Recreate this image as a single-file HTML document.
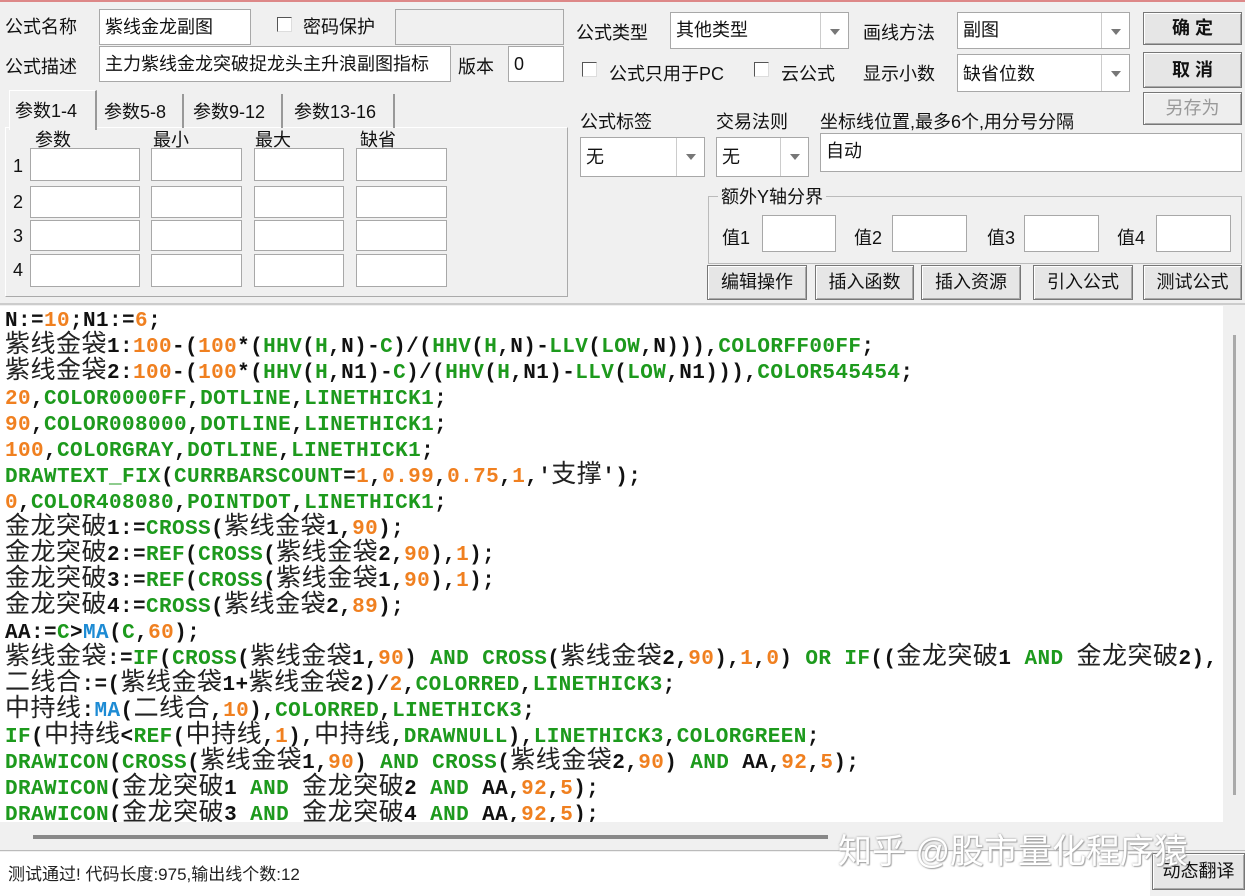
<!DOCTYPE html>
<html><head><meta charset="utf-8"><style>
*{box-sizing:border-box;margin:0;padding:0}
body{width:1245px;height:896px;background:#f0f0f0;position:relative;overflow:hidden;font-family:"Liberation Sans","Noto Sans CJK SC",sans-serif;font-size:18px;color:#111}
.a{position:absolute;white-space:nowrap}
.inp{position:absolute;background:#fff;border:1px solid #a8a8a8;font-size:18px;padding:4px 5px;line-height:26px;white-space:nowrap;overflow:hidden}
.cb{position:absolute;width:15px;height:15px;background:#fff;border:1px solid #555;border-right-color:#ddd;border-bottom-color:#ddd}
.btn{position:absolute;background:#e6e6e6;border:1px solid #777;box-shadow:inset 1px 1px 0 #fff,inset -1px -1px 0 #aaa;text-align:center;font-size:18px}
.dd{position:absolute;right:0;top:0;bottom:0;width:28px;border-left:1px solid #ccc}
.dd:after{content:"";position:absolute;left:9px;top:16px;border:5px solid transparent;border-top:6px solid #777}
.code{position:absolute;left:0;top:306px;width:1223px;height:516px;background:#fff;overflow:hidden}
.ln{position:absolute;left:5px;margin-top:3px;height:26px;font-family:"Liberation Mono",monospace;font-weight:bold;font-size:21px;letter-spacing:0.4px;white-space:nowrap;line-height:26px;color:#111}
.ln i{font-style:normal;font-weight:normal;font-family:"Noto Sans CJK SC",sans-serif;font-size:25px;letter-spacing:0.5px;line-height:0;color:#222}
.o{color:#f08020}.g{color:#1d9a1d}.b{color:#1d8bd4}
</style></head><body>
<div class="a" style="left:0;top:0;width:1245px;height:2px;background:#d88"></div>
<div class="a" style="left:5px;top:13px">公式名称</div>
<div class="inp" style="left:99px;top:9px;width:152px;height:36px">紫线金龙副图</div>
<div class="cb" style="left:277px;top:17px"></div>
<div class="a" style="left:303px;top:13px">密码保护</div>
<div class="inp" style="left:395px;top:9px;width:169px;height:36px;background:#f0f0f0"></div>
<div class="a" style="left:5px;top:53px">公式描述</div>
<div class="inp" style="left:99px;top:46px;width:352px;height:36px">主力紫线金龙突破捉龙头主升浪副图指标</div>
<div class="a" style="left:458px;top:53px">版本</div>
<div class="inp" style="left:508px;top:46px;width:56px;height:36px">0</div>
<div class="a" style="left:5px;top:127px;width:563px;height:170px;border:1px solid #aaa;border-top-color:#fff;border-left-color:#fff"></div>
<div class="a" style="left:9px;top:90px;width:88px;height:40px;background:#f0f0f0;border:1px solid #fff;border-right:2px solid #999;border-bottom:none;padding:6px 0 0 5px">参数1-4</div>
<div class="a" style="left:98px;top:94px;width:86px;height:34px;border-right:2px solid #999;padding:4px 0 0 6px">参数5-8</div>
<div class="a" style="left:187px;top:94px;width:96px;height:34px;border-right:2px solid #999;padding:4px 0 0 6px">参数9-12</div>
<div class="a" style="left:287px;top:94px;width:108px;height:34px;border-right:2px solid #999;padding:4px 0 0 7px">参数13-16</div>
<div class="a" style="left:35px;top:126px">参数</div>
<div class="a" style="left:153px;top:126px">最小</div>
<div class="a" style="left:255px;top:126px">最大</div>
<div class="a" style="left:360px;top:126px">缺省</div>
<div class="a" style="left:13px;top:156px">1</div><div class="a" style="left:13px;top:192px">2</div><div class="a" style="left:13px;top:226px">3</div><div class="a" style="left:13px;top:260px">4</div>
<div class="inp" style="left:30px;top:148px;width:110px;height:33px"></div><div class="inp" style="left:151px;top:148px;width:91px;height:33px"></div><div class="inp" style="left:254px;top:148px;width:90px;height:33px"></div><div class="inp" style="left:356px;top:148px;width:91px;height:33px"></div>
<div class="inp" style="left:30px;top:186px;width:110px;height:32px"></div><div class="inp" style="left:151px;top:186px;width:91px;height:32px"></div><div class="inp" style="left:254px;top:186px;width:90px;height:32px"></div><div class="inp" style="left:356px;top:186px;width:91px;height:32px"></div>
<div class="inp" style="left:30px;top:220px;width:110px;height:31px"></div><div class="inp" style="left:151px;top:220px;width:91px;height:31px"></div><div class="inp" style="left:254px;top:220px;width:90px;height:31px"></div><div class="inp" style="left:356px;top:220px;width:91px;height:31px"></div>
<div class="inp" style="left:30px;top:254px;width:110px;height:33px"></div><div class="inp" style="left:151px;top:254px;width:91px;height:33px"></div><div class="inp" style="left:254px;top:254px;width:90px;height:33px"></div><div class="inp" style="left:356px;top:254px;width:91px;height:33px"></div>
<div class="a" style="left:576px;top:19px">公式类型</div>
<div class="inp" style="left:670px;top:12px;width:179px;height:37px">其他类型<div class="dd"></div></div>
<div class="a" style="left:863px;top:19px">画线方法</div>
<div class="inp" style="left:957px;top:12px;width:173px;height:37px">副图<div class="dd"></div></div>
<div class="btn" style="left:1143px;top:12px;width:99px;height:33px;line-height:31px;font-weight:bold">确 定</div>
<div class="btn" style="left:1143px;top:52px;width:99px;height:36px;line-height:34px;font-weight:bold">取 消</div>
<div class="btn" style="left:1143px;top:92px;width:99px;height:33px;line-height:31px;color:#999;background:#eee">另存为</div>
<div class="cb" style="left:582px;top:62px"></div>
<div class="a" style="left:609px;top:60px">公式只用于PC</div>
<div class="cb" style="left:754px;top:62px"></div>
<div class="a" style="left:781px;top:60px">云公式</div>
<div class="a" style="left:863px;top:60px">显示小数</div>
<div class="inp" style="left:957px;top:54px;width:173px;height:38px;padding-top:6px">缺省位数<div class="dd"></div></div>
<div class="a" style="left:580px;top:108px">公式标签</div>
<div class="a" style="left:716px;top:108px">交易法则</div>
<div class="a" style="left:820px;top:108px">坐标线位置,最多6个,用分号分隔</div>
<div class="inp" style="left:580px;top:137px;width:125px;height:40px;padding-top:6px">无<div class="dd"></div></div>
<div class="inp" style="left:716px;top:137px;width:93px;height:40px;padding-top:6px">无<div class="dd"></div></div>
<div class="inp" style="left:820px;top:133px;width:422px;height:39px;padding-top:4px">自动</div>
<div class="a" style="left:708px;top:196px;width:534px;height:68px;border:1px solid #bbb"></div>
<div class="a" style="left:718px;top:183px;background:#f0f0f0;padding:0 3px">额外Y轴分界</div>
<div class="a" style="left:722px;top:224px">值1</div><div class="inp" style="left:762px;top:215px;width:74px;height:37px"></div>
<div class="a" style="left:854px;top:224px">值2</div><div class="inp" style="left:892px;top:215px;width:75px;height:37px"></div>
<div class="a" style="left:987px;top:224px">值3</div><div class="inp" style="left:1024px;top:215px;width:75px;height:37px"></div>
<div class="a" style="left:1117px;top:224px">值4</div><div class="inp" style="left:1156px;top:215px;width:75px;height:37px"></div>
<div class="btn" style="left:707px;top:265px;width:100px;height:35px;line-height:33px">编辑操作</div>
<div class="btn" style="left:815px;top:265px;width:99px;height:35px;line-height:33px">插入函数</div>
<div class="btn" style="left:921px;top:265px;width:100px;height:35px;line-height:33px">插入资源</div>
<div class="btn" style="left:1033px;top:265px;width:100px;height:35px;line-height:33px">引入公式</div>
<div class="btn" style="left:1143px;top:265px;width:99px;height:35px;line-height:33px">测试公式</div>
<div class="a" style="left:0;top:303px;width:1245px;height:2px;background:#ccc"></div>
<div class="code">
<div class="ln" style="top:0">N:=<span class="o">10</span>;N1:=<span class="o">6</span>;</div>
<div class="ln" style="top:26px"><i>紫线金袋</i>1:<span class="o">100</span>-(<span class="o">100</span>*(<span class="g">HHV</span>(<span class="g">H</span>,N)-<span class="g">C</span>)/(<span class="g">HHV</span>(<span class="g">H</span>,N)-<span class="g">LLV</span>(<span class="g">LOW</span>,N))),<span class="g">COLORFF00FF</span>;</div>
<div class="ln" style="top:52px"><i>紫线金袋</i>2:<span class="o">100</span>-(<span class="o">100</span>*(<span class="g">HHV</span>(<span class="g">H</span>,N1)-<span class="g">C</span>)/(<span class="g">HHV</span>(<span class="g">H</span>,N1)-<span class="g">LLV</span>(<span class="g">LOW</span>,N1))),<span class="g">COLOR545454</span>;</div>
<div class="ln" style="top:78px"><span class="o">20</span>,<span class="g">COLOR0000FF</span>,<span class="g">DOTLINE</span>,<span class="g">LINETHICK1</span>;</div>
<div class="ln" style="top:104px"><span class="o">90</span>,<span class="g">COLOR008000</span>,<span class="g">DOTLINE</span>,<span class="g">LINETHICK1</span>;</div>
<div class="ln" style="top:130px"><span class="o">100</span>,<span class="g">COLORGRAY</span>,<span class="g">DOTLINE</span>,<span class="g">LINETHICK1</span>;</div>
<div class="ln" style="top:156px"><span class="g">DRAWTEXT_FIX</span>(<span class="g">CURRBARSCOUNT</span>=<span class="o">1</span>,<span class="o">0.99</span>,<span class="o">0.75</span>,<span class="o">1</span>,'<i>支撑</i>');</div>
<div class="ln" style="top:182px"><span class="o">0</span>,<span class="g">COLOR408080</span>,<span class="g">POINTDOT</span>,<span class="g">LINETHICK1</span>;</div>
<div class="ln" style="top:208px"><i>金龙突破</i>1:=<span class="g">CROSS</span>(<i>紫线金袋</i>1,<span class="o">90</span>);</div>
<div class="ln" style="top:234px"><i>金龙突破</i>2:=<span class="g">REF</span>(<span class="g">CROSS</span>(<i>紫线金袋</i>2,<span class="o">90</span>),<span class="o">1</span>);</div>
<div class="ln" style="top:260px"><i>金龙突破</i>3:=<span class="g">REF</span>(<span class="g">CROSS</span>(<i>紫线金袋</i>1,<span class="o">90</span>),<span class="o">1</span>);</div>
<div class="ln" style="top:286px"><i>金龙突破</i>4:=<span class="g">CROSS</span>(<i>紫线金袋</i>2,<span class="o">89</span>);</div>
<div class="ln" style="top:312px">AA:=<span class="g">C</span>&gt;<span class="b">MA</span>(<span class="g">C</span>,<span class="o">60</span>);</div>
<div class="ln" style="top:338px"><i>紫线金袋</i>:=<span class="g">IF</span>(<span class="g">CROSS</span>(<i>紫线金袋</i>1,<span class="o">90</span>) <span class="g">AND</span> <span class="g">CROSS</span>(<i>紫线金袋</i>2,<span class="o">90</span>),<span class="o">1</span>,<span class="o">0</span>) <span class="g">OR</span> <span class="g">IF</span>((<i>金龙突破</i>1 <span class="g">AND</span> <i>金龙突破</i>2),</div>
<div class="ln" style="top:364px"><i>二线合</i>:=(<i>紫线金袋</i>1+<i>紫线金袋</i>2)/<span class="o">2</span>,<span class="g">COLORRED</span>,<span class="g">LINETHICK3</span>;</div>
<div class="ln" style="top:390px"><i>中持线</i>:<span class="b">MA</span>(<i>二线合</i>,<span class="o">10</span>),<span class="g">COLORRED</span>,<span class="g">LINETHICK3</span>;</div>
<div class="ln" style="top:416px"><span class="g">IF</span>(<i>中持线</i>&lt;<span class="g">REF</span>(<i>中持线</i>,<span class="o">1</span>),<i>中持线</i>,<span class="g">DRAWNULL</span>),<span class="g">LINETHICK3</span>,<span class="g">COLORGREEN</span>;</div>
<div class="ln" style="top:442px"><span class="g">DRAWICON</span>(<span class="g">CROSS</span>(<i>紫线金袋</i>1,<span class="o">90</span>) <span class="g">AND</span> <span class="g">CROSS</span>(<i>紫线金袋</i>2,<span class="o">90</span>) <span class="g">AND</span> AA,<span class="o">92</span>,<span class="o">5</span>);</div>
<div class="ln" style="top:468px"><span class="g">DRAWICON</span>(<i>金龙突破</i>1 <span class="g">AND</span> <i>金龙突破</i>2 <span class="g">AND</span> AA,<span class="o">92</span>,<span class="o">5</span>);</div>
<div class="ln" style="top:494px"><span class="g">DRAWICON</span>(<i>金龙突破</i>3 <span class="g">AND</span> <i>金龙突破</i>4 <span class="g">AND</span> AA,<span class="o">92</span>,<span class="o">5</span>);</div>
</div>
<div class="a" style="left:1223px;top:306px;width:22px;height:516px;background:#f0f0f0"></div>
<div class="a" style="left:1233px;top:335px;width:3px;height:460px;background:#aaa"></div>
<div class="a" style="left:33px;top:835px;width:795px;height:4px;background:#888"></div>
<div class="a" style="left:0;top:850px;width:1245px;height:1px;background:#bbb"></div>
<div class="a" style="left:0;top:852px;width:1150px;height:44px;background:#fff"></div>
<div class="a" style="left:8px;top:860px;font-size:17px;color:#222">测试通过! 代码长度:975,输出线个数:12</div>
<div class="btn" style="left:1152px;top:853px;width:93px;height:37px;line-height:35px">动态翻译</div>
<div class="a" style="left:838px;top:824px;font-size:34px;color:#fff;text-shadow:0 0 2px #999,1px 1px 1px #aaa">知乎 @股市量化程序猿</div>
</body></html>
